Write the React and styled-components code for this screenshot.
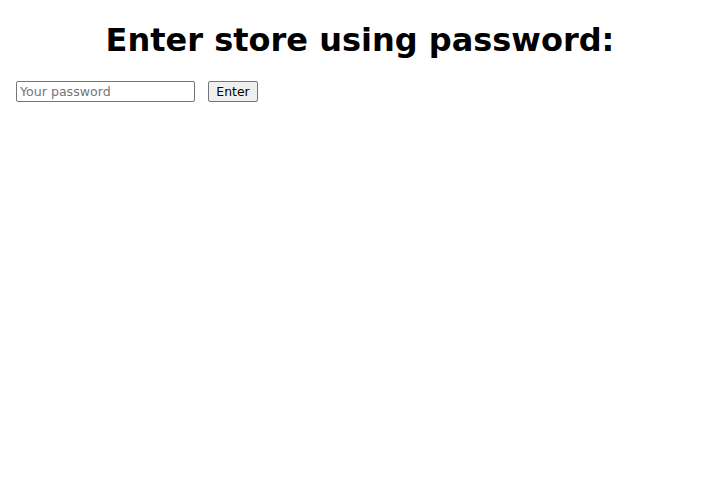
import styled, { createGlobalStyle } from "styled-components";

const GlobalStyle = createGlobalStyle`
    body {
        margin: 0;
        font-family: "DejaVu Sans", sans-serif;
        background: #fff;
        color: #000;
    }
`;

const Page = styled.div`
    display: flow-root;
    padding: 0 16px;
`;

const Title = styled.h1`
    font-size: 32px;
    font-weight: bold;
    text-align: center;
    margin: 21px 0 22px;
`;

const Form = styled.form`
    display: flex;
    align-items: center;
    gap: 13px;
`;

const PasswordInput = styled.input`
    box-sizing: border-box;
    font-family: "DejaVu Sans", sans-serif;
    font-size: 12.6px;
    width: 179px;
    height: 21px;
    padding: 1px 3px;
    border: 1px solid #767676;
    border-radius: 2px;
`;

const EnterButton = styled.button`
    box-sizing: border-box;
    font-family: "DejaVu Sans", sans-serif;
    font-size: 12.4px;
    width: 50px;
    height: 21px;
    padding: 0;
    border: 1px solid #767676;
    border-radius: 2px;
    background: #efefef;
    color: #000;
`;

export default function App() {
    return (
        <Page>
            <GlobalStyle />
            <Title>Enter store using password:</Title>
            <Form onSubmit={(e) => e.preventDefault()}>
                <PasswordInput type="password" placeholder="Your password" />
                <EnterButton type="submit">Enter</EnterButton>
            </Form>
        </Page>
    );
}
